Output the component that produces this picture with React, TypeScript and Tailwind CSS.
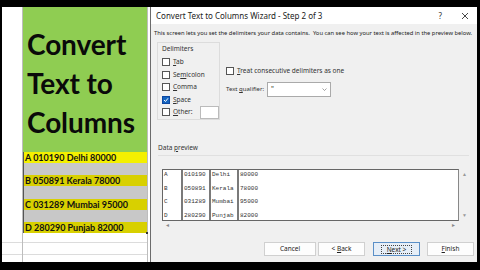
import React from "react";

const rows = [
  { t: "A 010190 Delhi 80000", bg: "bg-[#f4f000]" },
  { t: "B 050891 Kerala 78000", bg: "bg-[#d8d000]" },
  { t: "C 031289 Mumbai 95000", bg: "bg-[#d8d000]" },
  { t: "D 280290 Punjab 82000", bg: "bg-[#d8d000]" },
];

const preview = [
  ["A", "010190", "Delhi", "80000"],
  ["B", "050891", "Kerala", "78000"],
  ["C", "031289", "Mumbai", "95000"],
  ["D", "280290", "Punjab", "82000"],
];

function Check({ checked = false }: { checked?: boolean }) {
  return checked ? (
    <div className="w-[8px] h-[8px] bg-[#1565c0] border border-[#0d47a1] flex items-center justify-center shrink-0">
      <svg width="6" height="6" viewBox="0 0 6 6">
        <path d="M1 3 L2.5 4.5 L5 1.3" stroke="white" strokeWidth="1" fill="none" />
      </svg>
    </div>
  ) : (
    <div className="w-[8px] h-[8px] bg-white border border-[#555] shrink-0" />
  );
}

function PCol({ idx, first = false, w }: { idx: number; first?: boolean; w: string }) {
  return (
    <div className={`${w} ${first ? "" : "border-l-2 border-[#7a7a7a]"} flex flex-col pl-[1px] pt-[1px] overflow-hidden`}>
      {preview.map((p, i) => (
        <div key={i} className="h-[13.5px] shrink-0 leading-[7px]">{p[idx]}</div>
      ))}
    </div>
  );
}

export default function App() {
  const ui = { fontFamily: '"Noto Sans", "Open Sans", sans-serif' };
  const mono = { fontFamily: '"Liberation Mono", "DejaVu Sans Mono", monospace' };
  const cal = { fontFamily: 'Lato, "Open Sans", sans-serif' };
  return (
    <div className="w-[480px] h-[270px] bg-black flex flex-col overflow-hidden">
      <div className="h-[7px] shrink-0" />
      <div className="h-[255px] flex shrink-0">
        <div className="w-[2px] shrink-0" />
        {/* Spreadsheet */}
        <div className="w-[148px] shrink-0 bg-white flex relative">
          <div className="w-[21px] shrink-0 border-r border-[#bdbdbd] flex flex-col">
            <div className="h-[235px]" />
            <div className="h-[12px] border-t border-[#dcdcdc]" />
            <div className="h-[8px] border-t border-[#dcdcdc]" />
          </div>
          <div className="w-[124px] shrink-0 flex flex-col">
            <div className="h-[145px] bg-[#8fcd52] flex flex-col pl-[4px]" style={cal}>
              <div className="text-[28px] font-bold leading-[39px] mt-[18px] text-[#0a0a0a] tracking-[-0.1px]">Convert</div>
              <div className="text-[28px] font-bold leading-[39px] text-[#0a0a0a] tracking-[-0.1px]">Text to</div>
              <div className="text-[28px] font-bold leading-[39px] text-[#0a0a0a] tracking-[-0.1px]">Columns</div>
            </div>
            <div className="h-[81px] bg-[#c8c8c8] flex flex-col justify-between border-l border-[#555] relative" style={cal}>
              {rows.map((r, i) => (
                <div key={i} className={`h-[11px] ${r.bg} text-[9px] font-bold leading-[11px] pl-[1px] text-[#111]`}>
                  {r.t}
                </div>
              ))}
              <div className="absolute right-[-1px] bottom-[-1px] w-[2px] h-[2px] bg-[#333]" />
            </div>
            <div className="flex-1 flex flex-col">
              <div className="h-[9px]" />
              <div className="h-[12px] border-t border-[#dcdcdc]" />
              <div className="flex-1 border-t border-[#dcdcdc]" />
            </div>
          </div>
          <div className="flex-1 border-l border-[#bdbdbd]" />
        </div>
        {/* Dialog */}
        <div className="w-[327px] shrink-0 bg-[#f0f0f0] flex flex-col border-l border-[#6b6b6b]" style={ui}>
          <div className="h-[17px] bg-white flex items-center pl-[5px] pr-[8px] text-[8px] text-[#222] shrink-0">
            <span className="flex-1">Convert Text to Columns Wizard - Step 2 of 3</span>
            <span className="text-[8px] text-[#333] mr-[19px]">?</span>
            <svg width="8" height="8" viewBox="0 0 8 8">
              <path d="M1 1 L7 7 M7 1 L1 7" stroke="#333" strokeWidth="0.9" />
            </svg>
          </div>
          <div className="shrink-0 text-[5.8px] leading-[8px] text-[#222] mt-[5px] pl-[3px] whitespace-nowrap">
            This screen lets you set the delimiters your data contains.&nbsp; You can see how your text is affected in the preview below.
          </div>
          <div className="shrink-0 flex mt-[5px]">
            <div className="ml-[6px] w-[63px] h-[78px] border border-[#dcdcdc] pl-[4px] text-[6.5px] text-[#333] flex flex-col">
              <div className="leading-[8px] mt-[2px]">Delimiters</div>
              <div className="flex flex-col gap-[4.5px] mt-[5px]">
                <div className="flex items-center gap-[3px] h-[8px]"><Check /><span><u>T</u>ab</span></div>
                <div className="flex items-center gap-[3px] h-[8px]"><Check /><span>Se<u>m</u>icolon</span></div>
                <div className="flex items-center gap-[3px] h-[8px]"><Check /><span><u>C</u>omma</span></div>
                <div className="flex items-center gap-[3px] h-[8px]"><Check checked /><span><u>S</u>pace</span></div>
                <div className="flex items-center gap-[3px] h-[8px]"><Check /><span><u>O</u>ther:</span>
                  <div className="w-[19px] h-[13px] bg-white border border-[#bbb] ml-[4px]" />
                </div>
              </div>
            </div>
            <div className="ml-[6px] flex flex-col text-[6.5px] text-[#333]">
              <div className="flex items-center gap-[3px] mt-[25px] h-[8px]"><Check /><span><u>T</u>reat consecutive delimiters as one</span></div>
              <div className="flex items-center mt-[7px]">
                <span className="w-[41px] whitespace-nowrap text-[6px]">Text <u>q</u>ualifier:</span>
                <div className="w-[64px] h-[15px] bg-white border border-[#aaa] flex items-center justify-between px-[3px]">
                  <span className="text-[7px] leading-[7px] -mt-[3px]">"</span>
                  <svg width="5" height="3" viewBox="0 0 5 3"><path d="M0.5 0.5 L2.5 2.5 L4.5 0.5" stroke="#666" strokeWidth="0.6" fill="none" /></svg>
                </div>
              </div>
            </div>
          </div>
          <div className="shrink-0 mt-[24px] ml-[7px] mr-[8px] flex items-center gap-[3px] text-[6.5px] text-[#333] h-[8px] leading-[8px]">
            <span>Data <u>p</u>review</span>
          </div>
          <div className="shrink-0 ml-[7px] mr-[8px] mt-[3px] border-t border-[#e0e0e0]" />
          <div className="mt-[13px] ml-[11px] mr-[7px] h-[62px] flex shrink-0">
            <div className="flex-1 flex flex-col">
              <div className="h-[52px] shrink-0 bg-white border border-[#666] border-r-[#888] flex text-[6px] text-[#333] overflow-hidden" style={mono}>
                <PCol idx={0} first w="w-[18px]" />
                <PCol idx={1} w="w-[28px]" />
                <PCol idx={2} w="w-[28px]" />
                <PCol idx={3} w="w-[28px]" />
              </div>
              <div className="h-[10px] flex items-center justify-between px-[3px] text-[5px] text-[#888]">
                <span>◄</span><span>►</span>
              </div>
            </div>
            <div className="w-[11px] h-[52px] flex flex-col items-center justify-between py-[2px] text-[5px] text-[#999]">
              <span>▲</span><span>▼</span>
            </div>
          </div>
          <div className="shrink-0 flex mt-[11px] text-[6.5px] text-[#222]">
            <div className="ml-[113px] w-[52px] h-[14px] bg-[#fdfdfd] border border-[#d0d0d0] flex items-center justify-center">Cancel</div>
            <div className="ml-[2px] w-[47px] h-[14px] bg-[#fdfdfd] border border-[#d0d0d0] flex items-center justify-center whitespace-pre">{"< "}<u>B</u>ack</div>
            <div className="ml-[8px] w-[47px] h-[14px] bg-[#e6eef7] border border-[#5a8fc7] flex items-center justify-center"><span className="border border-dotted border-[#444] px-[5px] leading-[7px] whitespace-pre"><u>N</u>{"ext >"}</span></div>
            <div className="ml-[7px] w-[47px] h-[14px] bg-[#fdfdfd] border border-[#d0d0d0] flex items-center justify-center"><u>F</u>inish</div>
          </div>
        </div>
        <div className="flex-1" />
      </div>
    </div>
  );
}
